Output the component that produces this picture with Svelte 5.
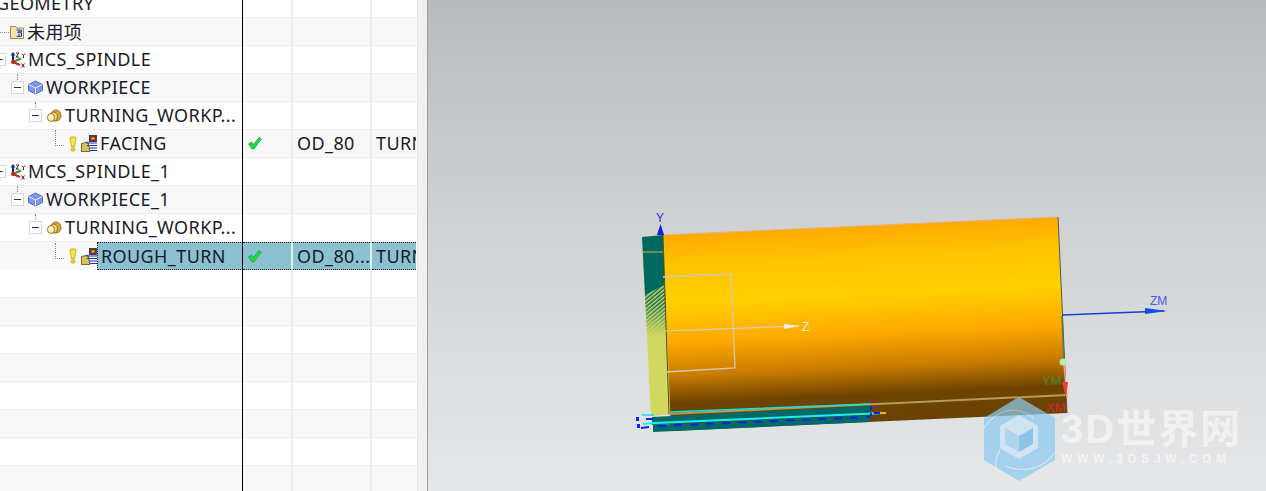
<script>
  // tree rows of the operation navigator, depth in 18px steps
  const rows = [
    { name: 'GEOMETRY', depth: 0, icon: 'none' },
    { name: '未用项', depth: 0, icon: 'folder' },
    { name: 'MCS_SPINDLE', depth: 0, icon: 'mcs', box: true },
    { name: 'WORKPIECE', depth: 1, icon: 'wp', box: true },
    { name: 'TURNING_WORKP...', depth: 2, icon: 'turn', box: true },
    { name: 'FACING', depth: 3, icon: 'op', check: true, tool: 'OD_80', path: 'TURN' },
    { name: 'MCS_SPINDLE_1', depth: 0, icon: 'mcs', box: true },
    { name: 'WORKPIECE_1', depth: 1, icon: 'wp', box: true },
    { name: 'TURNING_WORKP...', depth: 2, icon: 'turn', box: true },
    { name: 'ROUGH_TURN', depth: 3, icon: 'op', check: true, tool: 'OD_80...', path: 'TURN', selected: true },
    ...Array(8).fill({ name: '', depth: 0, icon: 'none' }),
  ]
</script>

<main>
  <section class="nav">
    <div class="list">
      {#each rows as row, i}
        <div class="row" class:odd={i % 2 === 1} class:selected={row.selected}>
          <div class="cell name">
            <div class="indent" style="margin-left: {row.depth * 18 - 7}px">
              {#if row.icon !== 'none'}
                <span class="lead">
                  {#if row.box}
                    {#if row.depth > 0}<span class="vdots"></span>{/if}
                    <span class="box"></span>
                  {:else if row.icon === 'op'}
                    <span class="corner"></span>
                  {:else}
                    <span class="hdots"></span>
                  {/if}
                </span>
                {#if row.icon === 'op'}
                  <svg class="bulb" width="10" height="16" viewBox="0 0 10 16">
                    <path d="M2.500 1h5L8 3 6.500 10.500h-3L2 3z" fill="#f8e838" stroke="#b8a020" stroke-width=".8" />
                    <ellipse cx="5" cy="13.500" rx="2.300" ry="1.800" fill="#f0d020" stroke="#b8a020" stroke-width=".6" />
                  </svg>
                  <svg class="icon" width="16" height="17" viewBox="0 0 16 17">
                    <path d="M.5 8.500L7 7l2 9.500H.5z" fill="#d8c05c" stroke="#5a4c18" stroke-width=".8" />
                    <path d="M5 8h11M6 10.500h10M8 13h8M9 15.500h7" stroke="#1a3a9a" stroke-width="1.200" />
                    <rect x="8.500" y=".5" width="7" height="6" fill="#7a3418" stroke="#1a2a6a" stroke-width=".8" />
                    <rect x="10.500" y="2.500" width="3" height="2" fill="#f0c040" />
                  </svg>
                {:else if row.icon === 'folder'}
                  <svg class="icon" width="14" height="14" viewBox="0 0 14 14">
                    <path d="M.5 1.500h5l1 1.500h7v10.500H.5z" fill="#f4e6a8" stroke="#a08c3c" />
                    <path d="M6.500 5h5v1.800H8v1h3.500v3.500h-5M8 10h2" fill="none" stroke="#1a2ae0" stroke-width="1" />
                  </svg>
                {:else if row.icon === 'mcs'}
                  <svg class="icon mcs" width="16" height="16" viewBox="0 0 16 16">
                    <path d="M3 10V2.500" stroke="#1a2a9a" stroke-width="2" />
                    <path d="M.5 3.500L3 0l2.500 3.500z" fill="#1a2a9a" />
                    <path d="M3 10l8-3.500" stroke="#2a9a2a" stroke-width="2" />
                    <path d="M3 10l7 3" stroke="#d02020" stroke-width="2" />
                    <circle cx="3" cy="10" r="2" fill="#d02020" />
                    <path d="M6 1h3L6 5h3M12 1.500l1.500 2 1.500-2M13.500 3.500V6M11.500 11.500l3 4M14.500 11.500l-3 4" fill="none" stroke="#222" stroke-width="1" />
                  </svg>
                {:else if row.icon === 'wp'}
                  <svg class="icon" width="15" height="15" viewBox="0 0 15 15">
                    <path d="M.5 4.500L7.500 1l7 3.500v6L7.500 14 .5 10.500z" fill="#7f95e8" stroke="#5a6ac8" />
                    <path d="M.5 4.500L7.500 8l7-3.500M7.500 8v6" fill="none" stroke="#e4eaff" />
                  </svg>
                {:else if row.icon === 'turn'}
                  <svg class="icon" width="16" height="14" viewBox="0 0 16 14">
                    <ellipse cx="10" cy="6.500" rx="5" ry="5.500" fill="#d8a83c" stroke="#94701c" />
                    <ellipse cx="7.500" cy="7.500" rx="4" ry="4.500" fill="#f2d070" stroke="#94701c" />
                    <ellipse cx="5" cy="8.500" rx="3.500" ry="4" fill="#fff4c8" stroke="#94701c" />
                  </svg>
                {/if}
              {/if}
              <span class="label" class:tag={row.selected}>{row.name}</span>
            </div>
          </div>
          <div class="cell state">
            {#if row.check}
              <svg width="14" height="13" viewBox="0 0 14 13">
                <path d="M.5 7l3-2 2 2.500L11 .5l2.500 1.500L6 12H4z" fill="#22d84a" stroke="#14a838" stroke-width=".7" />
              </svg>
            {/if}
          </div>
          <div class="cell tool"><span class="txt">{row.tool ?? ''}</span></div>
          <div class="cell path"><span class="txt">{row.path ?? ''}</span></div>
        </div>
      {/each}
    </div>
    <div class="divider"></div>
  </section>

  <div class="gutter"></div>

  <section class="view">
    <svg class="scene" width="838" height="491" viewBox="428 0 838 491">
      <defs>
        <linearGradient id="bg" x1="0" y1="0" x2="0" y2="1">
          <stop offset="0" stop-color="#b9babc" />
          <stop offset="0.45" stop-color="#d0d1d3" />
          <stop offset="1" stop-color="#e6e7e9" />
        </linearGradient>
        <linearGradient id="body" gradientUnits="userSpaceOnUse" x1="860" y1="226" x2="869" y2="422">
          <stop offset="0" stop-color="#fdaa00" />
          <stop offset="0.16" stop-color="#ffc400" />
          <stop offset="0.35" stop-color="#ffd000" />
          <stop offset="0.55" stop-color="#ffa800" />
          <stop offset="0.72" stop-color="#c87c00" />
          <stop offset="0.86" stop-color="#6e4300" />
          <stop offset="1" stop-color="#6a4200" />
        </linearGradient>
        <pattern id="hatch" width="3" height="3" patternUnits="userSpaceOnUse" patternTransform="rotate(-40)">
          <rect width="3" height="3" fill="#00695f" />
          <rect width="3" height="1.500" fill="#d0d860" />
        </pattern>
        <linearGradient id="fade" x1="0" y1="0" x2="0" y2="1">
          <stop offset="0.45" stop-color="#fff" />
          <stop offset="1" stop-color="#000" />
        </linearGradient>
        <mask id="fadeMask" maskUnits="userSpaceOnUse" x="640" y="280" width="30" height="55">
          <rect x="640" y="280" width="30" height="55" fill="url(#fade)" />
        </mask>
      </defs>
      <rect x="428" y="0" width="838" height="491" fill="url(#bg)" />

      <!-- end face -->
      <path d="M642 237l21-2 8 179-20 2z" fill="#d0d860" />
      <path d="M642 237l21-2 2 50-20 10z" fill="#00695f" />
      <path d="M645 295l20-10 2 50-20 0z" fill="url(#hatch)" mask="url(#fadeMask)" />

      <!-- cylinder body -->
      <path d="M663 235l395-18 9 196-396 18z" fill="url(#body)" />
      <path d="M663 235l395-18" stroke="#e8b080" stroke-width="1" fill="none" />
      <path d="M1058 217l9 196" stroke="#555" stroke-width="1" fill="none" />
      <path d="M663 235l6 178" stroke="#5a4a20" stroke-width="1" fill="none" />
      <path d="M668 414l399-19" stroke="#b89a50" stroke-width="2" fill="none" />

      <!-- turning workpiece outline -->
      <path d="M663 277l68-3 4 94-69 4" stroke="#d8c8b0" stroke-width="1.300" fill="none" />
      <path d="M642 252h21" stroke="#c8b860" fill="none" />

      <!-- tool path strip -->
      <path d="M652 417l218-11 0 8-218 11zM653 425l217-10 0 7-217 10z" fill="#006a68" />
      <path d="M642 415h12M670 412l200-8" stroke="#19e0e0" stroke-width="1.500" fill="none" />
      <path d="M643 424l12-1 230-10" stroke="#19f0f0" stroke-width="2" fill="none" />
      <path d="M658 426l212-9" stroke="#1020f0" stroke-width="2" stroke-dasharray="8 8" fill="none" />
      <path d="M636 417h3v4h-3zM637 424h3v4h-3z" fill="#1020f0" />
      <path d="M646 419h7M641 428l8-1" stroke="#1020f0" stroke-width="2" fill="none" />
      <path d="M871 406v4M871 413v3M874 413h11" stroke="#1020f0" stroke-width="2" fill="none" />
      <path d="M880 413h6" stroke="#ffb000" stroke-width="2" />

      <!-- work coordinates -->
      <path d="M661 235v-8" stroke="#1020f0" stroke-width="1" />
      <path d="M657 235l3.500-11 3.500 11z" fill="#1020f0" />
      <text class="axis" x="656" y="222" fill="#2030e0">Y</text>
      <path d="M664 331l135-5" stroke="#d8d0c0" stroke-width="1.200" />
      <path d="M784 324l16 2-16 3z" fill="#f2f0e8" />
      <text class="axis" x="802" y="331" fill="#f0eee0">Z</text>

      <!-- machine coordinates -->
      <path d="M1062 315l102-4" stroke="#1040d0" stroke-width="1.500" />
      <path d="M1145 308l22 3-22 3z" fill="#1050e0" />
      <text class="axis" x="1150" y="305" fill="#4060e0">ZM</text>
      <path d="M1062 316l2 48" stroke="#5a7a50" stroke-width="1.500" />
      <path d="M1064 364l3 34" stroke="#f0a0a0" stroke-width="1.500" />
      <path d="M1062 382l6 0-2 16z" fill="#e84040" />
      <circle cx="1063" cy="362" r="3.500" fill="#b0f0a0" />
      <text class="axis mach" x="1042" y="385" fill="#4a8a30">YM</text>
      <text class="axis mach" x="1046" y="412" fill="#d03030">XM</text>

      <!-- watermark logo -->
      <g opacity=".72">
        <path d="M1019 397l36 21v42l-36 21-35-21v-42z" fill="#8ccbf0" />
        <path d="M1019 415l19 11v22l-19 11-19-11v-22z" fill="#f4f8fb" opacity=".6" />
        <path d="M1019 420l14 8-14 8-14-8z" fill="#c4e4f8" />
        <path d="M1005 428l14 8v16l-14-8z" fill="#9ad0f0" />
        <path d="M1033 428l-14 8v16l14-8z" fill="#6cb8e8" />
        <path d="M984 428c12-18 30-24 50-10M1055 452c-10 16-30 22-50 14M1000 450c-6 10-6 20 2 30" stroke="#e4f0f8" stroke-width="1" fill="none" />
      </g>
    </svg>
    <div class="wm">
      <div class="wm-big">3D世界网</div>
      <div class="wm-small">WWW.3DSJW.COM</div>
    </div>
  </section>
</main>

<style>
  :global(body) {
    margin: 0;
    overflow: hidden;
  }
  main {
    display: flex;
    width: 1266px;
    height: 491px;
    overflow: hidden;
    background: #fff;
    font-family: "Noto Sans", "Noto Sans CJK SC", sans-serif;
    font-size: 18px;
    letter-spacing: 0.4px;
    color: #1b1b2a;
  }
  .nav {
    position: relative;
    width: 417px;
    height: 491px;
    flex: none;
    overflow: hidden;
    border-right: 1px solid #e4e4e4;
  }
  .list {
    margin-top: -10px;
  }
  .row {
    display: grid;
    grid-template-columns: 243px 50px 79px 44px;
    height: 28px;
    box-sizing: border-box;
    border-bottom: 1px solid #ededed;
  }
  .row.odd {
    background: #f8f8f8;
  }
  .cell {
    display: flex;
    align-items: center;
    min-width: 0;
    white-space: nowrap;
    overflow: hidden;
    border-right: 2px solid #ececec;
    box-sizing: border-box;
  }
  .cell.name {
    border-right: none;
  }
  .indent {
    display: flex;
    align-items: center;
    flex: 1;
    align-self: stretch;
    min-width: 0;
  }
  .cell.tool,
  .cell.path {
    padding-left: 4px;
  }
  .cell.path {
    border-right: none;
  }
  .cell.state {
    padding-left: 5px;
  }
  .selected {
    border-bottom: none;
  }
  .selected .state,
  .selected .tool,
  .selected .path,
  .label.tag {
    background: #8bc1d0;
    border-top: 1px dotted #222;
    border-bottom: 1px dotted #222;
  }
  .selected .state,
  .selected .tool {
    border-right-color: #e6f0f3;
  }
  .label,
  .txt {
    padding-bottom: 1px;
  }
  .label {
    margin-left: 3px;
  }
  .label.tag {
    display: flex;
    align-items: center;
    align-self: stretch;
    flex: 1;
    margin-left: 0;
    padding-left: 3px;
    border-left: 1px dotted #222;
  }
  .lead {
    position: relative;
    width: 17px;
    height: 27px;
    flex: none;
  }
  .box {
    position: absolute;
    left: 0;
    top: 7px;
    width: 11px;
    height: 11px;
    border: 1px solid #d6d6d6;
    background: linear-gradient(#333, #333) center / 7px 1px no-repeat #fff;
  }
  .vdots {
    position: absolute;
    left: 6px;
    top: 0;
    height: 6px;
    border-left: 1px dotted #8a8a8a;
  }
  .hdots {
    position: absolute;
    left: 7px;
    top: 14px;
    width: 9px;
    border-top: 1px dotted #8a8a8a;
  }
  .corner {
    position: absolute;
    left: 8px;
    top: 0;
    width: 8px;
    height: 15px;
    border-left: 1px dotted #8a8a8a;
    border-bottom: 1px dotted #8a8a8a;
  }
  .bulb {
    flex: none;
    margin-left: 4px;
    margin-right: 3px;
  }
  .icon {
    flex: none;
  }
  .icon.mcs {
    margin-right: -1px;
  }
  .divider {
    position: absolute;
    left: 242px;
    top: 0;
    width: 1px;
    height: 491px;
    background: #000;
  }
  .gutter {
    width: 9px;
    flex: none;
    background: #f0f0f0;
    border-right: 1px solid #a0a0a0;
  }
  .view {
    position: relative;
    flex: 1;
    min-width: 0;
  }
  .scene {
    display: block;
  }
  .axis {
    font-family: "Liberation Sans", sans-serif;
    font-size: 12px;
    letter-spacing: 0;
  }
  .axis.mach {
    font-size: 13px;
  }
  .wm {
    position: absolute;
    left: 633px;
    top: 406px;
    color: #fff;
    opacity: 0.55;
    font-family: "Liberation Sans", "Noto Sans CJK SC", sans-serif;
    font-weight: 700;
    letter-spacing: 0;
  }
  .wm-big {
    font-size: 40px;
    line-height: 46px;
    letter-spacing: 2px;
    white-space: nowrap;
  }
  .wm-small {
    font-size: 12px;
    line-height: 14px;
    letter-spacing: 4.700px;
    white-space: nowrap;
  }
</style>
